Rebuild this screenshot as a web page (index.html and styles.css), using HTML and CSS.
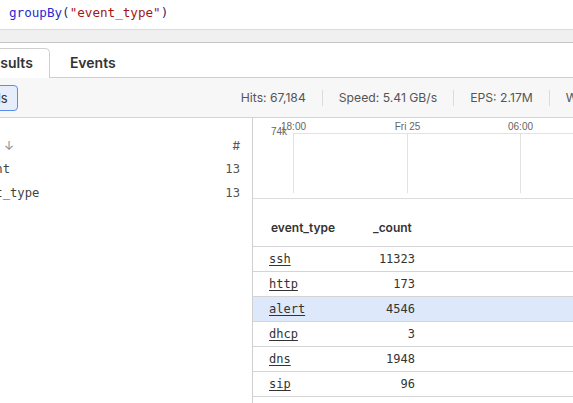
FILE: index.html
```html
<!DOCTYPE html>
<html>
<head>
<meta charset="utf-8">
<link rel="stylesheet" href="styles.css">
</head>
<body>
<div class="editor"><span class="fn">groupBy</span><span class="paren">(</span><span class="str">"event_type"</span><span class="paren">)</span></div>
<div class="divider"></div>
<div class="app">
  <div class="tabs">
    <div class="tab active">Results</div>
    <div class="tab">Events</div>
  </div>
  <div class="toolbar">
    <button class="btn">Details</button>
    <div class="stats">
      <span class="stat">Hits: 67,184</span>
      <span class="stat">Speed: 5.41 GB/s</span>
      <span class="stat">EPS: 2.17M</span>
      <span class="stat">Work: 1.2K</span>
    </div>
  </div>
  <div class="split">
    <div class="fields">
      <div class="frow fhead"><span class="arrow">↓</span><span class="fcount">#</span></div>
      <div class="frow"><span class="fname mono">_count</span><span class="fcount mono">13</span></div>
      <div class="frow"><span class="fname mono">event_type</span><span class="fcount mono">13</span></div>
    </div>
    <div class="results">
      <div class="chart">
        <svg width="330" height="80" viewBox="0 0 330 80">
          <line x1="40" y1="15.5" x2="330" y2="15.5" stroke="#e3e3e3"/>
          <line x1="40.5" y1="15" x2="40.5" y2="75" stroke="#e3e3e3"/>
          <line x1="154.5" y1="15" x2="154.5" y2="75" stroke="#e3e3e3"/>
          <line x1="267.5" y1="15" x2="267.5" y2="75" stroke="#e3e3e3"/>
          <text x="40.5" y="11.5" class="axis" text-anchor="middle">18:00</text>
          <text x="154.5" y="11.5" class="axis" text-anchor="middle">Fri 25</text>
          <text x="267.5" y="11.5" class="axis" text-anchor="middle">06:00</text>
          <text x="34" y="16.5" class="axis" text-anchor="end">74k</text>
        </svg>
      </div>
      <table class="grid">
        <colgroup><col class="w1"><col class="w2"><col></colgroup>
        <thead>
          <tr><th class="c1">event_type</th><th class="c2">_count</th><th></th></tr>
        </thead>
        <tbody>
          <tr><td class="c1"><span class="link">ssh</span></td><td class="num">11323</td><td></td></tr>
          <tr><td class="c1"><span class="link">http</span></td><td class="num">173</td><td></td></tr>
          <tr class="sel"><td class="c1"><span class="link">alert</span></td><td class="num">4546</td><td></td></tr>
          <tr><td class="c1"><span class="link">dhcp</span></td><td class="num">3</td><td></td></tr>
          <tr><td class="c1"><span class="link">dns</span></td><td class="num">1948</td><td></td></tr>
          <tr><td class="c1"><span class="link">sip</span></td><td class="num">96</td><td></td></tr>
        </tbody>
      </table>
    </div>
  </div>
</div>
</body>
</html>
```
FILE: styles.css
```css
html, body {
  margin: 0;
  padding: 0;
  background: #fff;
  overflow: hidden;
  width: 573px;
  height: 403px;
}
body {
  font-family: Inter, "Noto Sans", sans-serif;
  color: #333;
}
.editor {
  height: 30px;
  box-sizing: border-box;
  border-bottom: 1px solid #dcdcdc;
  padding: 3px 0 0 9px;
  font-family: "DejaVu Sans Mono", monospace;
  font-size: 12.6px;
  line-height: 20px;
}
.fn { color: #2a2ad4; }
.paren { color: #2b2b6b; }
.str { color: #a31515; }
.divider {
  height: 13px;
  box-sizing: border-box;
  background: #f0f0f0;
  border-bottom: 1px solid #c6c6c6;
}
.app {
  margin-left: -60px;
  width: 760px;
}
.tabs {
  display: flex;
  align-items: flex-end;
  gap: 4px;
  height: 35px;
  box-sizing: border-box;
  padding-left: 26px;
  border-bottom: 1px solid #cfcfcf;
  background: #fff;
}
.tab {
  height: 29px;
  box-sizing: border-box;
  padding: 0 16px;
  font-size: 14px;
  font-weight: 600;
  line-height: 29px;
  color: #333;
}
.tab.active {
  height: 30px;
  margin-bottom: -1px;
  border: 1px solid #cfcfcf;
  border-bottom: 0;
  border-radius: 0 5px 0 0;
  background: #fff;
  line-height: 28px;
}
.toolbar {
  display: flex;
  align-items: center;
  height: 40px;
  box-sizing: border-box;
  background: #f7f7f7;
  border-bottom: 1px solid #d4d4d4;
}
.btn {
  height: 26px;
  box-sizing: border-box;
  margin-left: 16px;
  padding: 0 9px 0 9px;
  border: 1px solid #5b8def;
  border-radius: 4px;
  background: #e6eefc;
  font-family: Inter, sans-serif;
  font-size: 13px;
  color: #333;
}
.stats {
  display: flex;
  align-items: center;
  margin-left: 223px;
}
.stat {
  font-size: 12.2px;
  color: #555;
  padding: 0 16px;
  line-height: 16px;
  border-left: 1px solid #dcdcdc;
}
.stat:first-child {
  border-left: 0;
  padding-left: 0;
}
.split {
  display: flex;
  height: 290px;
}
.fields {
  width: 313px;
  box-sizing: border-box;
  border-right: 1px solid #cfcfcf;
  padding: 15px 12px 0 26px;
}
.frow {
  display: flex;
  justify-content: space-between;
  align-items: center;
  height: 24px;
  font-size: 12px;
}
.fhead { color: #777; }
.arrow { color: #888; padding-left: 38px; }
.mono {
  font-family: "DejaVu Sans Mono", monospace;
  font-size: 12.2px;
  color: #444;
}
.fcount { color: #555; }
.results {
  flex: 1;
}
.chart {
  height: 81px;
  box-sizing: border-box;
  border-bottom: 1px solid #dcdcdc;
}
.chart svg { display: block; }
.axis {
  font-family: "Liberation Sans", Arial, sans-serif;
  font-size: 10px;
  fill: #666;
}
.grid {
  border-collapse: collapse;
  table-layout: fixed;
  width: 100%;
}
.w1 { width: 104px; }
.w2 { width: 74px; }
.grid th {
  height: 47px;
  box-sizing: border-box;
  text-align: left;
  font-size: 12px;
  font-weight: 600;
  color: #333;
  padding: 10px 0 0 0;
  border-bottom: 1px solid #d4d4d4;
}
.grid th.c1 { padding-left: 18px; }
.grid th.c2 { padding-left: 16px; }
.grid td {
  height: 25px;
  box-sizing: border-box;
  padding: 1px 0 0 0;
  border-bottom: 1px solid #d4d4d4;
  font-family: "DejaVu Sans Mono", monospace;
  font-size: 12px;
  color: #333;
}
.grid td.c1 { padding-left: 16px; }
.grid td.num { text-align: right; padding-right: 16px; }
.link { text-decoration: underline; text-underline-offset: 2px; color: #333; }
.sel td { background: #dde8fb; }
```
